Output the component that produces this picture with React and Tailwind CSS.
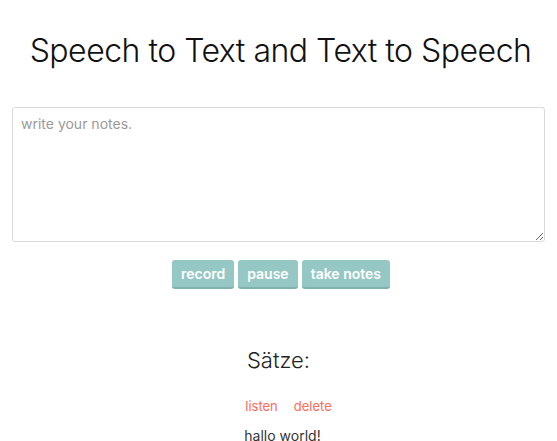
import React from "react";

const App = () => {
  const sentences = ["hallo world!"];

  return (
    <div
      className="min-h-screen w-full bg-white text-[#222] flex flex-col items-center"
      style={{ fontFamily: '"Inter", "Liberation Sans", sans-serif' }}
    >
      <h1 className="mt-[32px] text-[32px] leading-[38px] font-light text-[#111] tracking-[-0.5px] ml-[4px]">
        Speech to Text and Text to Speech
      </h1>

      <div className="w-full px-[12px] mt-[37px]">
        <textarea
          placeholder="write your notes."
          className="w-full h-[135px] block border border-[#d9d9d9] rounded-[3px] px-[8px] py-[5px] text-[14px] text-[#333] placeholder:text-[#9a9a9a] outline-none resize-y"
        />
      </div>

      {/* controls */}
      <div className="flex gap-[4px] mt-[18px] ml-[5px]">
        <button className="h-[29px] px-[9px] bg-[#95c8c5] text-white text-[14px] font-semibold rounded-[3px] border-b-2 border-[#7fb2af]">
          record
        </button>
        <button className="h-[29px] px-[9px] bg-[#95c8c5] text-white text-[14px] font-semibold rounded-[3px] border-b-2 border-[#7fb2af]">
          pause
        </button>
        <button className="h-[29px] px-[9px] bg-[#95c8c5] text-white text-[14px] font-semibold rounded-[3px] border-b-2 border-[#7fb2af]">
          take notes
        </button>
      </div>

      <h2 className="mt-[57px] text-[22px] leading-[28px] font-light text-[#222]">Sätze:</h2>

      {sentences.map((s) => (
        <div key={s} className="flex flex-col items-center mt-[23px] ml-[8px]">
          <div className="flex gap-[16px] text-[13px] text-[#ff6b57] ml-[12px]">
            <button>listen</button>
            <button>delete</button>
          </div>
          <p className="mt-[8px] text-[14px] text-[#333]">{s}</p>
        </div>
      ))}
    </div>
  );
};

export default App;
